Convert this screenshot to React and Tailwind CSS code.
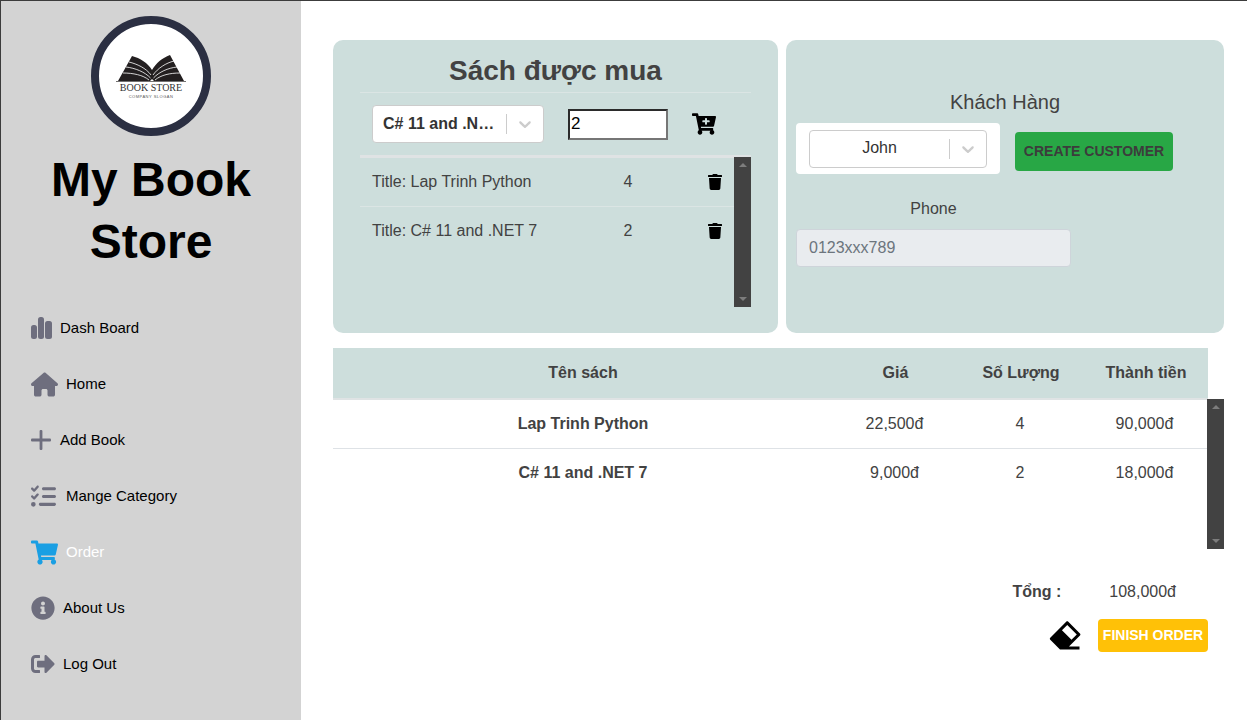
import React from 'react';
import { FaShoppingCart, FaInfoCircle, FaSignOutAlt, FaCartPlus, FaTrash } from 'react-icons/fa';
import { FaListCheck, FaHouse } from 'react-icons/fa6';
import { RiEraserFill } from 'react-icons/ri';

const NAV = [
  { label: 'Dash Board', icon: <BarsIcon />, gap: 'ml-[8px]' },
  { label: 'Home', icon: <FaHouse size={27} />, gap: 'ml-[8px]' },
  { label: 'Add Book', icon: <PlusIcon />, gap: 'ml-[9px]' },
  { label: 'Mange Category', icon: <FaListCheck size={25} />, gap: 'ml-[10px]' },
  { label: 'Order', icon: <FaShoppingCart size={27} className="text-[#1a9fe3]" />, gap: 'ml-[8px]', active: true },
  { label: 'About Us', icon: <FaInfoCircle size={24} />, gap: 'ml-[8px]' },
  { label: 'Log Out', icon: <FaSignOutAlt size={24} />, gap: 'ml-[8px]' },
];

const CART = [
  { title: 'Lap Trinh Python', qty: 4 },
  { title: 'C# 11 and .NET 7', qty: 2 },
];

const ORDER = [
  { title: 'Lap Trinh Python', price: '22,500đ', qty: 4, total: '90,000đ' },
  { title: 'C# 11 and .NET 7', price: '9,000đ', qty: 2, total: '18,000đ' },
];

function BarsIcon() {
  return (
    <svg width="21" height="22" viewBox="0 0 21 22" fill="currentColor">
      <rect x="0" y="8" width="6" height="14" rx="2.5" />
      <rect x="7" y="0" width="6" height="22" rx="2.5" />
      <rect x="14" y="4" width="7" height="18" rx="2.5" />
    </svg>
  );
}

function PlusIcon() {
  return (
    <svg width="20" height="20" viewBox="0 0 20 20" fill="currentColor">
      <rect x="0" y="8.6" width="20" height="2.8" rx="1" />
      <rect x="8.6" y="0" width="2.8" height="20" rx="1" />
    </svg>
  );
}

function Chevron() {
  return (
    <svg width="20" height="20" viewBox="0 0 20 20" fill="#cccccc">
      <path d="M4.516 7.548c0.436-0.446 1.043-0.481 1.576 0l3.908 3.747 3.908-3.747c0.533-0.481 1.141-0.446 1.574 0 0.436 0.445 0.408 1.197 0 1.615-0.406 0.418-4.695 4.502-4.695 4.502-0.217 0.223-0.502 0.335-0.787 0.335s-0.57-0.112-0.789-0.335c0 0-4.287-4.084-4.695-4.502s-0.436-1.17 0-1.615z" />
    </svg>
  );
}

// thanh cuon gia, giong thanh cuon toi cua trinh duyet
function ScrollBar({ className }) {
  return (
    <div className={`w-[17px] h-[150px] bg-[#424242] flex flex-col items-center justify-between py-[6px] shrink-0 ${className || ''}`}>
      <div className="w-0 h-0 border-x-[4px] border-x-transparent border-b-[4px] border-b-[#7d7d7d]" />
      <div className="w-0 h-0 border-x-[4px] border-x-transparent border-t-[4px] border-t-[#7d7d7d]" />
    </div>
  );
}

function BookLogo() {
  return (
    <div className="w-[120px] h-[120px] rounded-full border-[8px] border-[#2b2f42] bg-white flex flex-col items-center pt-[31px] shrink-0">
      <svg width="70" height="27" viewBox="0 0 70 27">
        <path d="M2 26 L16 1 C24 3 32 8 36 15 C40 8 46 3 54 0 L68 26 L38 26 L36 24 L34 26 Z" fill="#231f20" />
        <path d="M13 7 C21 9 30 13 35 20 M10 12 C19 13 29 17 34.5 23 M7 18 C17 18 27 20 33 25 M58 6 C50 8 42 13 37 20 M61 12 C52 13 43 17 37.5 23 M64 18 C54 18 45 20 39 25" stroke="#ffffff" strokeWidth="0.8" fill="none" />
        <path d="M0 26.6 H70" stroke="#231f20" strokeWidth="0.7" />
      </svg>
      <div className="font-['Liberation_Serif',serif] text-[10px] leading-[10px] mt-[1px] text-[#333333] whitespace-nowrap">BOOK STORE</div>
      <div className="text-[4px] leading-[5px] mt-[1px] tracking-[0.5px] text-[#555555] whitespace-nowrap">COMPANY SLOGAN</div>
    </div>
  );
}

function Sidebar() {
  return (
    <aside className="w-[300px] h-full bg-[#d3d3d3] flex flex-col shrink-0">
      <div className="flex justify-center pt-[15px]">
        <BookLogo />
      </div>
      <h1 className="mt-[13px] px-[40px] text-center text-[48px] leading-[62px] font-bold text-black">My Book Store</h1>
      <nav className="mt-[27px] pl-[30px] flex flex-col">
        {NAV.map((item) => (
          <div key={item.label} className="h-[56px] flex items-center">
            <span className="text-[#6e6e7e] flex items-center">{item.icon}</span>
            <span className={`${item.gap} text-[15px] ${item.active ? 'text-white' : 'text-black'}`}>{item.label}</span>
          </div>
        ))}
      </nav>
    </aside>
  );
}

function BooksPanel() {
  return (
    <section className="w-[445px] h-[293px] bg-[#cddedc] rounded-[10px] px-[27px] shrink-0">
      <h2 className="text-[28px] leading-[52px] h-[53px] pt-[5px] font-bold text-center border-b border-[#dbe5e4]">Sách được mua</h2>
      <div className="h-[62px] flex items-center pl-[12px]">
        <div className="w-[172px] h-[38px] bg-white rounded-[4px] border border-[#cccccc] flex items-center">
          <span className="pl-[10px] pr-[10px] flex-1 min-w-0 font-bold text-[#333333] truncate">C# 11 and .NET 7</span>
          <span className="w-px h-[20px] bg-[#cccccc]" />
          <span className="w-[36px] flex justify-center"><Chevron /></span>
        </div>
        <input
          readOnly
          value="2"
          className="ml-[24px] w-[100px] h-[31px] bg-white text-black px-px text-[17px] border-2 border-t-[#2b2b2b] border-l-[#2b2b2b] border-r-[#767676] border-b-[#767676] outline-none"
        />
        <FaCartPlus size={24} className="ml-[24px] text-black" />
      </div>
      <div className="h-[3px] bg-[#dfe3e4]" />
      <div className="flex">
        <div className="flex-1 pt-px">
          {CART.map((row, i) => (
            <div key={row.title} className={`h-[48px] flex items-center pl-[12px] ${i === 0 ? 'pb-[2px] border-b border-[#dbe5e4]' : ''}`}>
              <span className="w-[242px]">Title: {row.title}</span>
              <span className="w-[28px] text-center">{row.qty}</span>
              <FaTrash size={16} className={`ml-[65px] text-black ${i === 0 ? '' : '-mt-[1px]'}`} />
            </div>
          ))}
        </div>
        <ScrollBar className="-mt-px" />
      </div>
    </section>
  );
}

function CustomerPanel() {
  return (
    <section className="w-[438px] h-[293px] bg-[#cddedc] rounded-[10px] pl-[10px] shrink-0">
      <div className="pt-[48px] w-[418px] text-center text-[20px] leading-[28px]">Khách Hàng</div>
      <div className="flex items-center mt-[7px]">
        <div className="w-[204px] h-[51px] bg-white rounded-[4px] flex items-center justify-center">
          <div className="w-[178px] h-[38px] rounded-[4px] border border-[#cccccc] flex items-center">
            <span className="flex-1 text-center text-[#333333] pb-[2px]">John</span>
            <span className="w-px h-[20px] bg-[#cccccc]" />
            <span className="w-[36px] flex justify-center"><Chevron /></span>
          </div>
        </div>
        <button className="ml-[15px] mt-[6px] w-[158px] h-[39px] bg-[#28a745] rounded-[4px] text-[14px] font-bold text-[#3c3c3c] uppercase">
          Create Customer
        </button>
      </div>
      <div className="w-[275px] mt-[23px] text-center leading-[24px]">Phone</div>
      <div className="w-[275px] h-[38px] mt-[8px] bg-[#e9ecef] border border-[#ced4da] rounded-[4px] flex items-center pl-[12px] text-[#6c757d]">
        0123xxx789
      </div>
    </section>
  );
}

function OrderTable() {
  return (
    <div className="mt-[15px]">
      <div className="w-[875px] h-[52px] bg-[#cddedc] border-b-2 border-[#dfe3e4] grid grid-cols-[500px_125px_125px_125px] items-center text-center font-bold">
        <div>Tên sách</div>
        <div>Giá</div>
        <div className="pl-[1px]">Số Lượng</div>
        <div className="pl-[1px]">Thành tiền</div>
      </div>
      <div className="flex">
        <div className="w-[874px]">
          {ORDER.map((row, i) => (
            <div key={row.title} className={`grid grid-cols-[500px_125px_125px_125px] items-center text-center ${i === 0 ? 'h-[49px] border-b border-[#dee2e6]' : 'h-[47px]'}`}>
              <div className="font-bold">{row.title}</div>
              <div className="pr-[2px]">{row.price}</div>
              <div className="pr-[1px]">{row.qty}</div>
              <div className="pr-[2px]">{row.total}</div>
            </div>
          ))}
        </div>
        <ScrollBar className="-mt-px" />
      </div>
    </div>
  );
}

export default function App() {
  return (
    <div className="w-[1247px] h-[720px] flex overflow-hidden bg-white border-l border-t border-[#3c3c3c] font-['Liberation_Sans',Arial,sans-serif] text-[#424242]">
      <Sidebar />
      <main className="flex-1 pl-[32px] pt-[39px]">
        <div className="flex gap-[8px]">
          <BooksPanel />
          <CustomerPanel />
        </div>
        <OrderTable />
        <div className="w-[875px] mt-[31px] flex justify-end items-center h-[24px]">
          <span className="font-bold">Tổng :</span>
          <span className="ml-[48px] mr-[32px]">108,000đ</span>
        </div>
        <div className="w-[875px] h-[33px] mt-[15px] flex justify-end items-center">
          <RiEraserFill size={36} className="text-black" />
          <button className="ml-[14px] w-[110px] h-[33px] bg-[#ffc107] rounded-[4px] text-[14px] font-bold text-white uppercase">
            Finish Order
          </button>
        </div>
      </main>
    </div>
  );
}
